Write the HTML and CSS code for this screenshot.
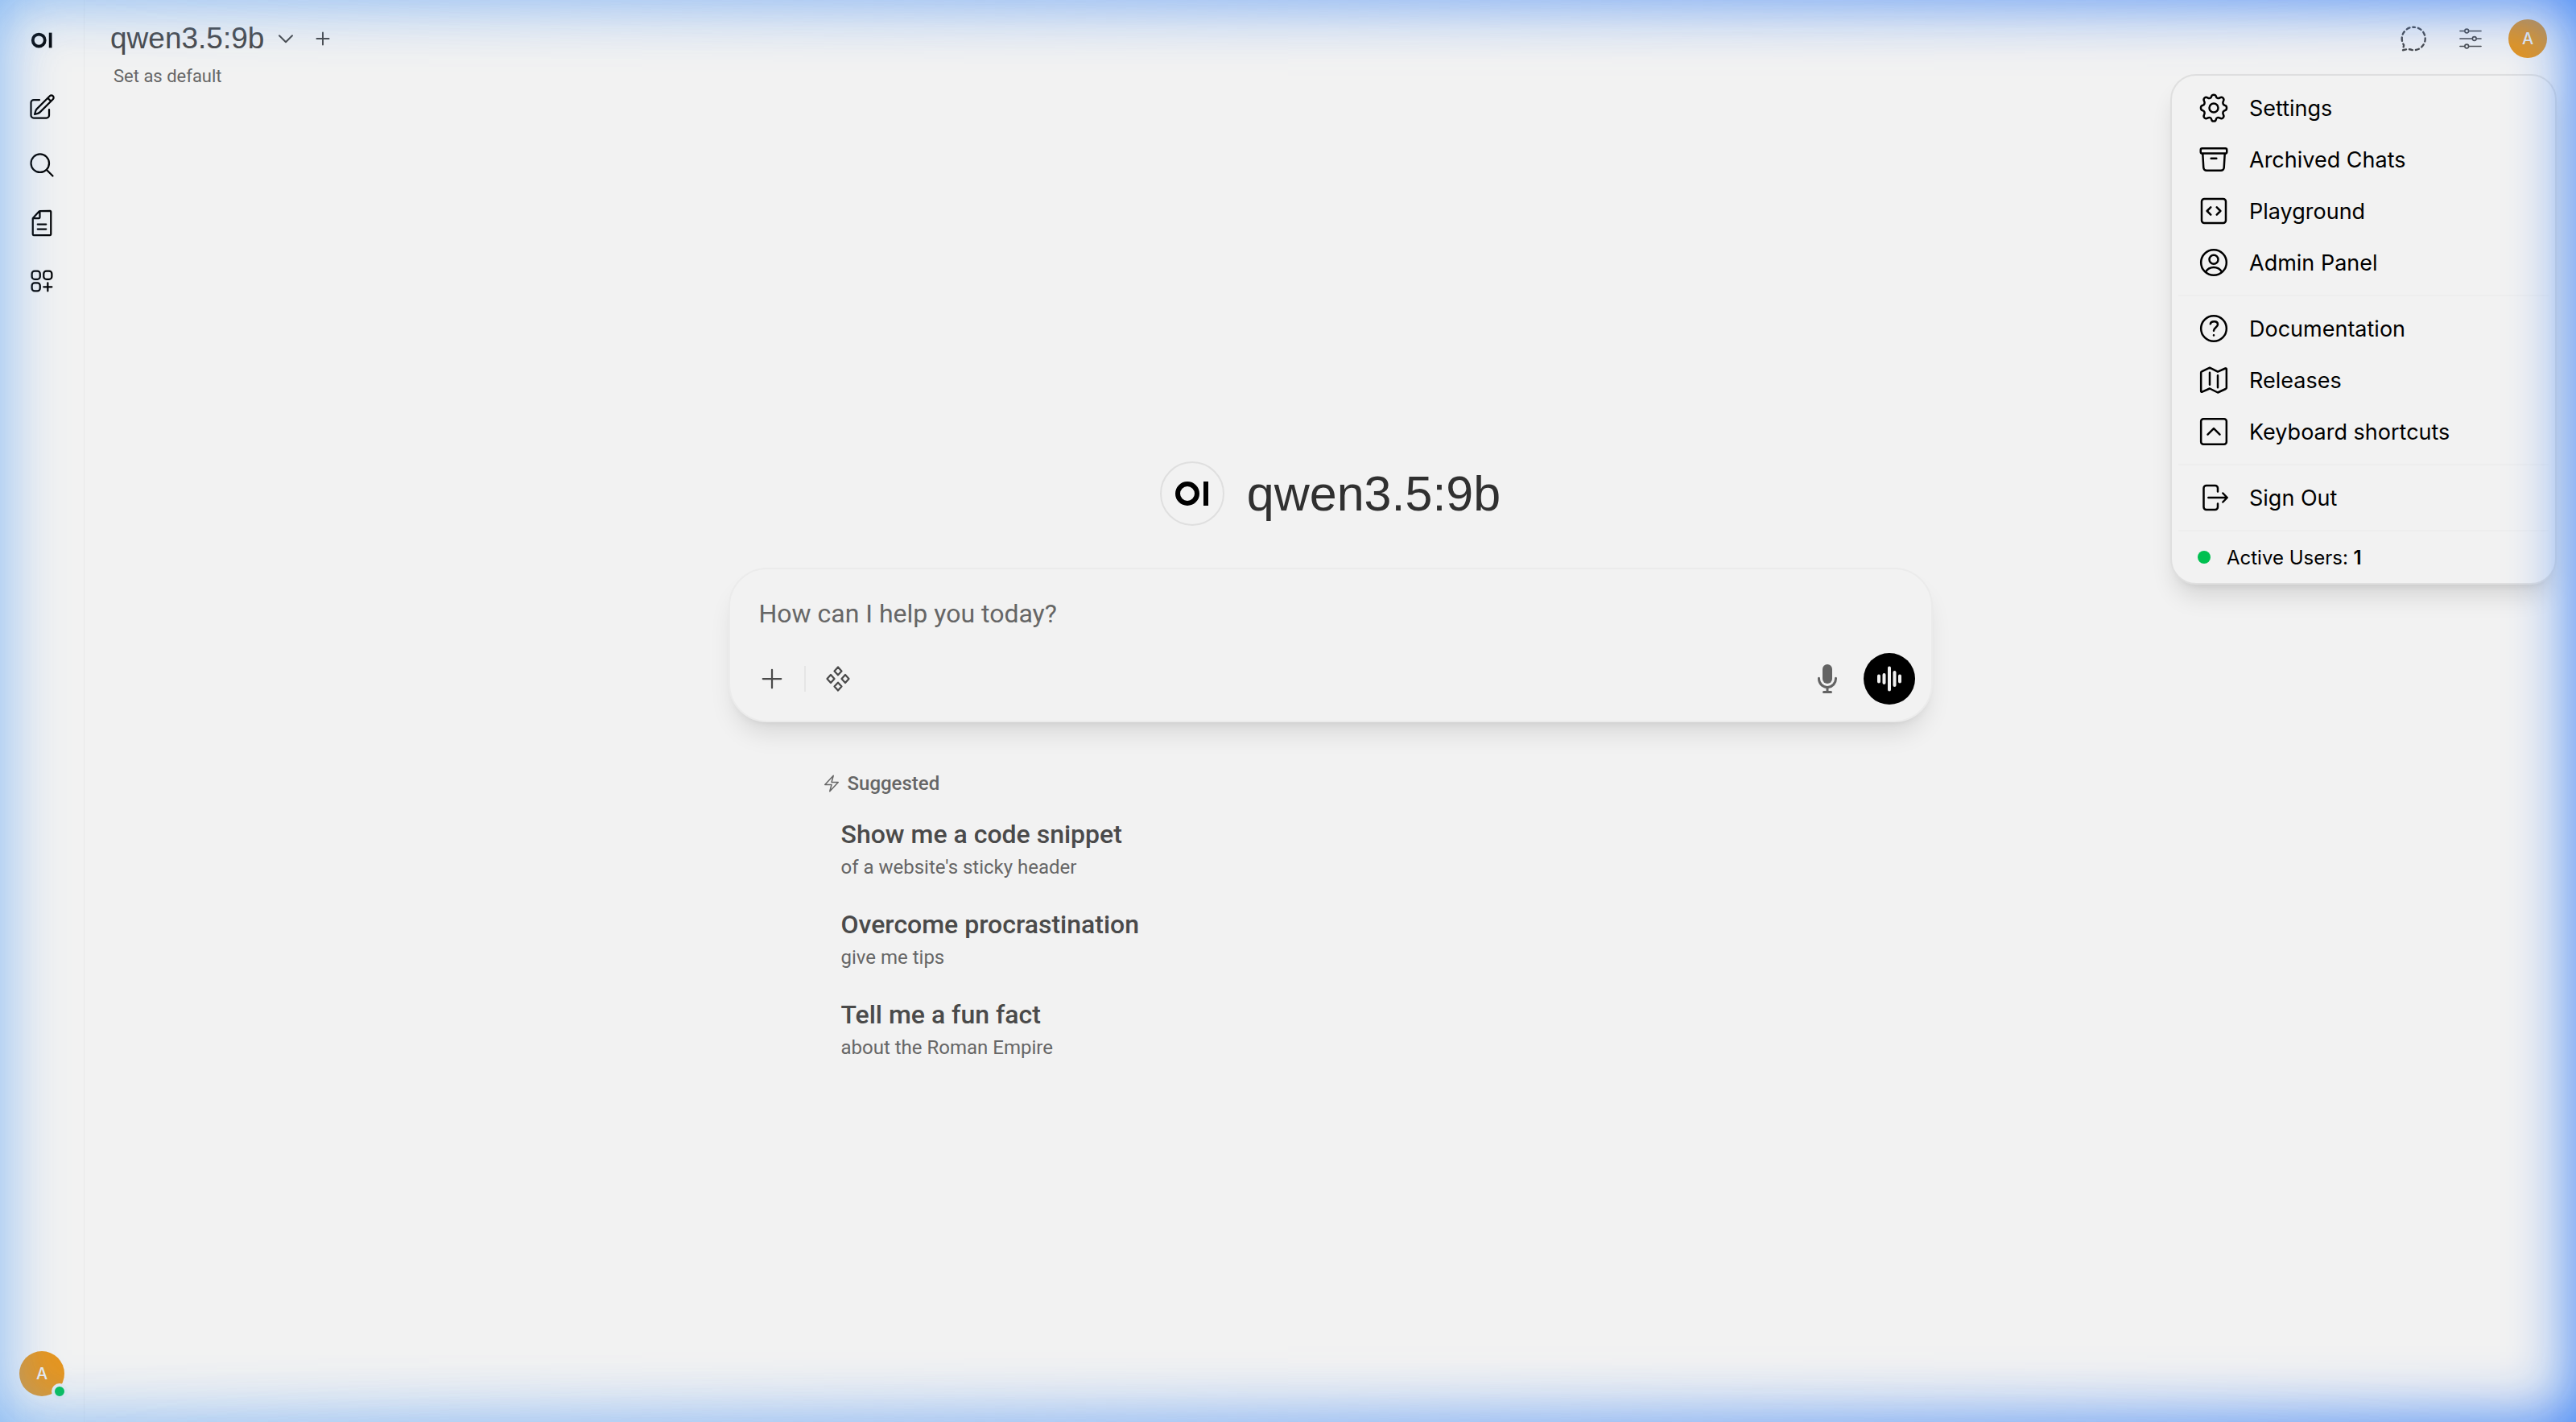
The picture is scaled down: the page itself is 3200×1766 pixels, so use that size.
FILE: index.html
```html
<!DOCTYPE html>
<html lang="en">
<head>
  <meta charset="UTF-8" />
  <title>qwen3.5:9b</title>
  <link rel="stylesheet" href="styles.css">
</head>
<body>

  <nav class="sidebar">
    <a href="#" class="brand" aria-label="Home">
      <svg viewBox="0 0 42 32"><circle cx="15" cy="16" r="12" stroke-width="6"/><path d="M38 1v30" stroke-width="6"/></svg>
    </a>
    <button aria-label="New Chat">
      <svg viewBox="0 0 24 24"><path d="m16.862 4.487 1.687-1.688a1.875 1.875 0 1 1 2.652 2.652L10.582 16.07a4.5 4.5 0 0 1-1.897 1.13L6 18l.8-2.685a4.5 4.5 0 0 1 1.13-1.897l8.932-8.931Zm0 0L19.5 7.125M18 14v4.75A2.25 2.25 0 0 1 15.75 21H5.25A2.25 2.25 0 0 1 3 18.75V8.25A2.25 2.25 0 0 1 5.25 6H10"/></svg>
    </button>
    <button aria-label="Search">
      <svg viewBox="0 0 24 24"><path d="m21 21-5.197-5.197m0 0A7.5 7.5 0 1 0 5.196 5.196a7.5 7.5 0 0 0 10.607 10.607Z"/></svg>
    </button>
    <button aria-label="Notes">
      <svg viewBox="0 0 24 24"><path d="M8.5 13h7M8.5 17h7M4.500 21.400V8.250a.6.6 0 0 1 .18-.42l5.200-5.650a.6.6 0 0 1 .42-.18H18.900a.6.6 0 0 1 .6.6v18.800a.6.6 0 0 1-.6.6H5.100a.6.6 0 0 1-.6-.6ZM10.300 2v5.400a.6.6 0 0 1-.6.6H4.500"/></svg>
    </button>
    <button aria-label="Workspace">
      <svg viewBox="0 0 24 24"><path d="M13.5 16.875h3.375m0 0h3.375m-3.375 0V13.5m0 3.375v3.375M6 10.5h2.25a2.25 2.25 0 0 0 2.25-2.25V6a2.25 2.25 0 0 0-2.25-2.25H6A2.25 2.25 0 0 0 3.75 6v2.25A2.25 2.25 0 0 0 6 10.5Zm0 9.75h2.25A2.25 2.25 0 0 0 10.5 18v-2.25a2.25 2.25 0 0 0-2.25-2.25H6a2.25 2.25 0 0 0-2.25 2.25V18A2.25 2.25 0 0 0 6 20.25Zm9.75-9.75H18a2.25 2.25 0 0 0 2.25-2.25V6A2.25 2.25 0 0 0 18 3.75h-2.25A2.25 2.25 0 0 0 13.5 6v2.25a2.25 2.25 0 0 0 2.25 2.25Z"/></svg>
    </button>
    <button class="avatar side-avatar" aria-label="User profile">A<span class="status"></span></button>
  </nav>

  <div class="page">
    <header>
      <div class="models">
        <div class="model-row">
          <button class="model-name">qwen3.5:9b
            <svg viewBox="0 0 24 24"><path d="m20 8.250-8 8-8-8"/></svg>
          </button>
          <button class="add-model" aria-label="Add Model">
            <svg viewBox="0 0 24 24"><path d="M12 4.500v15M4.500 12h15"/></svg>
          </button>
        </div>
        <button class="set-default">Set as default</button>
      </div>
      <div class="tools">
        <button aria-label="Temporary Chat">
          <svg viewBox="0 0 24 24"><path d="M12 3a9 9 0 1 1-1 17.900 11 11 0 0 0-4-.6l-3.200.7.700-4A9 9 0 0 1 12 3Z" stroke-dasharray="2.600 2.500" stroke-dashoffset="1.300"/></svg>
        </button>
        <button class="controls" aria-label="Controls">
          <svg viewBox="0 0 24 24"><path d="M10.5 6h9.750M10.5 6a1.5 1.5 0 1 1-3 0m3 0a1.5 1.5 0 1 0-3 0M3.750 6H7.5m3 12h9.750m-9.750 0a1.5 1.5 0 0 1-3 0m3 0a1.5 1.5 0 0 0-3 0m-3.750 0H7.5m9-6h3.750m-3.750 0a1.5 1.5 0 0 1-3 0m3 0a1.5 1.5 0 0 0-3 0m-9.750 0h9.750"/></svg>
        </button>
        <button class="avatar" aria-label="User menu">A</button>
      </div>
    </header>

    <main>
      <h1>
        <span class="model-logo"><svg viewBox="0 0 42 32"><circle cx="15" cy="16" r="12" stroke-width="6"/><path d="M38 1v30" stroke-width="6"/></svg></span>
        qwen3.5:9b
      </h1>

      <form class="composer">
        <input type="text" placeholder="How can I help you today?" aria-label="Message" />
        <div class="actions">
          <button type="button" aria-label="More">
            <svg viewBox="0 0 24 24"><path d="M12 4.500v15M4.500 12h15"/></svg>
          </button>
          <span class="split"></span>
          <button type="button" aria-label="Integrations">
            <svg viewBox="0 0 24 24"><path d="M12 2.300l3 3.300-3 3.300-3-3.300ZM12 15.100l3 3.300-3 3.300-3-3.300ZM6 8.700 9 12l-3 3.300L3 12ZM18 8.700l3 3.300-3 3.300-3-3.300Z"/></svg>
          </button>
          <button type="button" class="mic" aria-label="Dictate">
            <svg viewBox="0 0 20 20"><path d="M7 4a3 3 0 0 1 6 0v6a3 3 0 1 1-6 0V4Z"/><path d="M5.5 9.643a.75.75 0 0 0-1.5 0V10c0 3.06 2.29 5.585 5.25 5.954V17.5h-1.5a.75.75 0 0 0 0 1.5h4.5a.75.75 0 0 0 0-1.5h-1.5v-1.546A6.001 6.001 0 0 0 16 10v-.357a.75.75 0 0 0-1.5 0V10a4.5 4.5 0 0 1-9 0v-.357Z"/></svg>
          </button>
          <button type="button" class="voice" aria-label="Voice mode">
            <svg viewBox="0 0 40 40"><path d="M7 16.500v7M13.500 15v10M20 6.500v27M26.500 12v16M33 16.500v7"/></svg>
          </button>
        </div>
      </form>

      <section class="suggestions">
        <h2><svg viewBox="0 0 24 24"><path d="m3.750 13.5 10.5-11.250L12 10.5h8.250L9.750 21.750 12 13.5H3.750Z"/></svg>Suggested</h2>
        <button><b>Show me a code snippet</b><span>of a website's sticky header</span></button>
        <button><b>Overcome procrastination</b><span>give me tips</span></button>
        <button><b>Tell me a fun fact</b><span>about the Roman Empire</span></button>
      </section>
    </main>
  </div>

  <div class="user-menu">
    <button>
      <svg viewBox="0 0 24 24"><circle cx="12" cy="12" r="3.300"/><path d="M10.4 3.200C10.700 1.900 13.300 1.900 13.600 3.200c.3 1.600 1.700 2 3 1.200 1.700-1 3.500.7 2.600 2.400-.8 1.400-.4 2.900 1.300 3.400 1.500.4 1.500 3.200 0 3.600-1.700.5-2.100 2-1.300 3.400.9 1.700-.9 3.400-2.600 2.400-1.300-.8-2.700-.4-3 1.200-.3 1.500-2.900 1.500-3.200 0-.3-1.600-1.700-2-3-1.200-1.700 1-3.500-.7-2.600-2.400.8-1.400.4-2.900-1.300-3.400-1.500-.4-1.500-3.200 0-3.600 1.700-.5 2.100-2 1.300-3.400-.9-1.700.9-3.400 2.600-2.400 1.300.8 2.700.4 3-1.200Z"/></svg>
      Settings
    </button>
    <button>
      <svg viewBox="0 0 24 24"><path d="m20.250 7.500-.625 10.632a2.250 2.250 0 0 1-2.247 2.118H6.622a2.250 2.250 0 0 1-2.247-2.118L3.750 7.500M10 11.250h4M3.375 7.500h17.250c.621 0 1.125-.504 1.125-1.125v-1.500c0-.621-.504-1.125-1.125-1.125H3.375c-.621 0-1.125.504-1.125 1.125v1.500c0 .621.504 1.125 1.125 1.125Z"/></svg>
      Archived Chats
    </button>
    <button>
      <svg viewBox="0 0 24 24"><path d="M14.250 9.250 17 12l-2.750 2.750m-4.500 0L7 12l2.750-2.750M5 21h14a2 2 0 0 0 2-2V5a2 2 0 0 0-2-2H5a2 2 0 0 0-2 2v14a2 2 0 0 0 2 2Z"/></svg>
      Playground
    </button>
    <button>
      <svg viewBox="0 0 24 24"><circle cx="12" cy="12" r="9.500"/><circle cx="12" cy="9.750" r="3.300"/><path d="M6 19a7 7 0 0 1 12 0"/></svg>
      Admin Panel
    </button>
    <hr>
    <button>
      <svg viewBox="0 0 24 24"><circle cx="12" cy="12" r="9.500"/><path d="M9.500 8.600C9.900 6.200 15 6 15 9c0 2-3 2.200-3 4.700M12 17v.1"/></svg>
      Documentation
    </button>
    <button>
      <svg viewBox="0 0 24 24"><path d="M9 6.500v9M15 8.500v9M3.400 5.500 9 2.800l6 3 5.600-2.500c.4-.2.900.1.900.6v13.800c0 .4-.2.700-.6.900L15 21.300l-6-3-5.600 2.500c-.4.200-.9-.1-.9-.6V6.400c0-.4.300-.7.900-.9Z"/></svg>
      Releases
    </button>
    <button>
      <svg viewBox="0 0 24 24"><rect x="2.500" y="2.500" width="19" height="19" rx="1.800"/><path d="m7.500 14.200 4.500-4.500 4.500 4.500"/></svg>
      Keyboard shortcuts
    </button>
    <hr>
    <button>
      <svg viewBox="0 0 24 24"><path d="M15 7.500V5a2 2 0 0 0-2-2H6.500a2 2 0 0 0-2 2v14a2 2 0 0 0 2 2H13a2 2 0 0 0 2-2v-2.500M8 12h14M18.800 8.700 22 12l-3.200 3.300" /></svg>
      Sign Out
    </button>
    <hr>
    <div class="active-users"><i></i><span>Active Users: <b>1</b></span></div>
  </div>

  <div class="glow"></div>
</body>
</html>
```

FILE: styles.css
```css
* {
  box-sizing: border-box;
}
body {
  margin: 0;
  min-height: 100vh;
  display: flex;
  font-family: Roboto, "Liberation Sans", sans-serif;
  background: #f2f2f2;
  color: #4a4a4a;
}
button {
  font: inherit;
  color: inherit;
  background: none;
  border: none;
  padding: 0;
  cursor: pointer;
}
svg {
  fill: none;
  stroke: currentColor;
  stroke-width: 1.5;
  stroke-linecap: round;
  stroke-linejoin: round;
  display: block;
  flex: none;
}

/* sidebar */
.sidebar {
  width: 105px;
  border-right: 1px solid #e9e9e9;
  display: flex;
  flex-direction: column;
  align-items: center;
  color: #000;
  padding: 12px 0 32px;
}
.sidebar > a, .sidebar > button {
  width: 72px;
  height: 72px;
  display: flex;
  align-items: center;
  justify-content: center;
}
.sidebar svg {
  width: 36px;
  height: 36px;
}
.sidebar .brand {
  height: 76px;
  margin-bottom: 9px;
  color: #000;
}
.brand svg, .model-logo svg {
  stroke-linecap: butt;
}
.sidebar .brand svg {
  width: 28px;
  height: 20px;
}
.avatar {
  width: 48px;
  height: 48px;
  border-radius: 50%;
  background: #e8951b;
  color: #f1f1f1;
  font-family: Inter, sans-serif;
  font-size: 20px;
  font-weight: 500;
}
.sidebar .side-avatar {
  width: 56px;
  height: 56px;
  margin-top: auto;
  position: relative;
}
.status {
  position: absolute;
  right: -4px;
  bottom: -4px;
  width: 20px;
  height: 20px;
  border-radius: 50%;
  border: 4px solid #eceff1;
  background: #00c050;
}

/* top bar */
.page {
  flex: 1;
  display: flex;
  flex-direction: column;
}
header {
  display: flex;
  justify-content: space-between;
  padding: 24px 36px 0 32px;
}
.model-row {
  display: flex;
  align-items: center;
  height: 48px;
}
.model-name {
  display: flex;
  align-items: center;
  gap: 15px;
  font-family: "Liberation Sans", sans-serif;
  font-size: 37px;
}
.model-name svg, .add-model svg {
  width: 24px;
  height: 24px;
  stroke-width: 2;
}
.add-model {
  margin-left: 22px;
}
.set-default {
  margin-left: 4px;
  font-size: 22px;
  line-height: 46px;
  display: block;
  color: #666;
}
.tools {
  display: flex;
  align-items: center;
  height: 48px;
  gap: 23px;
}
.tools button {
  width: 48px;
}
.tools svg {
  width: 38px;
  height: 38px;
  margin: 0 auto;
}
.tools .controls svg {
  stroke-width: 1;
}

/* centre */
main {
  width: 1496px;
  max-width: 100%;
  margin: 455px auto 0;
}
h1 {
  display: flex;
  align-items: center;
  justify-content: center;
  gap: 28px;
  height: 80px;
  margin: 0 0 52px;
  font-family: "Liberation Sans", sans-serif;
  font-size: 61px;
  font-weight: 400;
  color: #303030;
}
.model-logo {
  width: 80px;
  height: 80px;
  border: 2px solid #dfdfdf;
  border-radius: 50%;
  display: flex;
  align-items: center;
  justify-content: center;
  color: #000;
}
.model-logo svg {
  width: 42px;
  height: 32px;
}
.composer {
  height: 192px;
  border: 2px solid #ebebeb;
  border-radius: 48px;
  background: #f2f2f2;
  box-shadow: 0 20px 30px -6px rgba(0,0,0,0.1), 0 8px 12px -8px rgba(0,0,0,0.1);
  padding: 22px 20px 16px 34px;
}
.composer input {
  display: block;
  width: 100%;
  height: 66px;
  padding: 0 2px;
  border: none;
  outline: none;
  background: none;
  font: inherit;
  font-size: 32px;
}
.composer input::placeholder {
  color: #666;
  opacity: 1;
}
.actions {
  display: flex;
  align-items: center;
  height: 64px;
  margin-top: 16px;
}
.actions svg {
  width: 36px;
  height: 36px;
}
.split {
  width: 2px;
  height: 32px;
  margin: 0 22px;
  background: #e5e5e5;
}
.mic {
  margin: 0 25px 0 auto;
  color: #636363;
}
.actions .mic svg {
  width: 40px;
  height: 40px;
  fill: currentColor;
  stroke: none;
}
.voice {
  width: 64px;
  height: 64px;
  border-radius: 50%;
  background: #000;
  color: #f1f1f1;
  display: flex;
  align-items: center;
  justify-content: center;
}
.voice svg {
  width: 40px;
  height: 40px;
  stroke-width: 4;
}
.suggestions {
  padding: 60px 116px 0;
}
.suggestions h2 {
  display: flex;
  align-items: center;
  gap: 8px;
  height: 32px;
  margin: 0 0 11px;
  font-size: 24px;
  font-weight: 500;
  color: #666;
}
.suggestions h2 svg {
  width: 24px;
  height: 24px;
}
.suggestions button {
  display: flex;
  flex-direction: column;
  height: 112px;
  padding: 14px 24px;
  text-align: left;
}
.suggestions b {
  font-size: 32px;
  line-height: 44px;
  font-weight: 500;
}
.suggestions span {
  font-size: 24px;
  line-height: 38px;
  color: #666;
}

/* user menu */
.user-menu {
  position: absolute;
  top: 92px;
  right: 24px;
  width: 480px;
  padding: 8px;
  border: 2px solid #dfdfdf;
  border-radius: 32px;
  background: #f2f2f2;
  box-shadow: 0 20px 30px -6px rgba(0,0,0,0.12), 0 8px 12px -8px rgba(0,0,0,0.1);
  color: #000;
  font-family: Inter, sans-serif;
  font-size: 27px;
}
.user-menu button {
  display: flex;
  align-items: center;
  gap: 24px;
  width: 100%;
  height: 64px;
  padding: 0 24px;
}
.user-menu svg {
  width: 40px;
  height: 40px;
}
.user-menu hr {
  border: none;
  height: 2px;
  margin: 8px 0;
  background: #eee;
}
.active-users {
  display: flex;
  align-items: center;
  gap: 20px;
  height: 48px;
  padding: 0 24px;
  font-size: 24px;
}
.active-users i {
  width: 16px;
  height: 16px;
  border-radius: 50%;
  background: #00c050;
}
.active-users b {
  font-weight: 600;
}

/* edge light over the whole window, pale on the left and stronger on the right */
.glow, .glow::before, .glow::after {
  position: fixed;
  inset: 0;
  pointer-events: none;
}
.glow::before, .glow::after {
  content: "";
}
.glow::before {
  box-shadow: inset 0 0 76px rgba(96,165,245,0.8);
  mask-image: linear-gradient(to right, #000, transparent);
}
.glow::after {
  box-shadow: inset 0 0 76px 4px rgba(59,130,246,0.98);
  mask-image: linear-gradient(to right, transparent, #000);
}
```
